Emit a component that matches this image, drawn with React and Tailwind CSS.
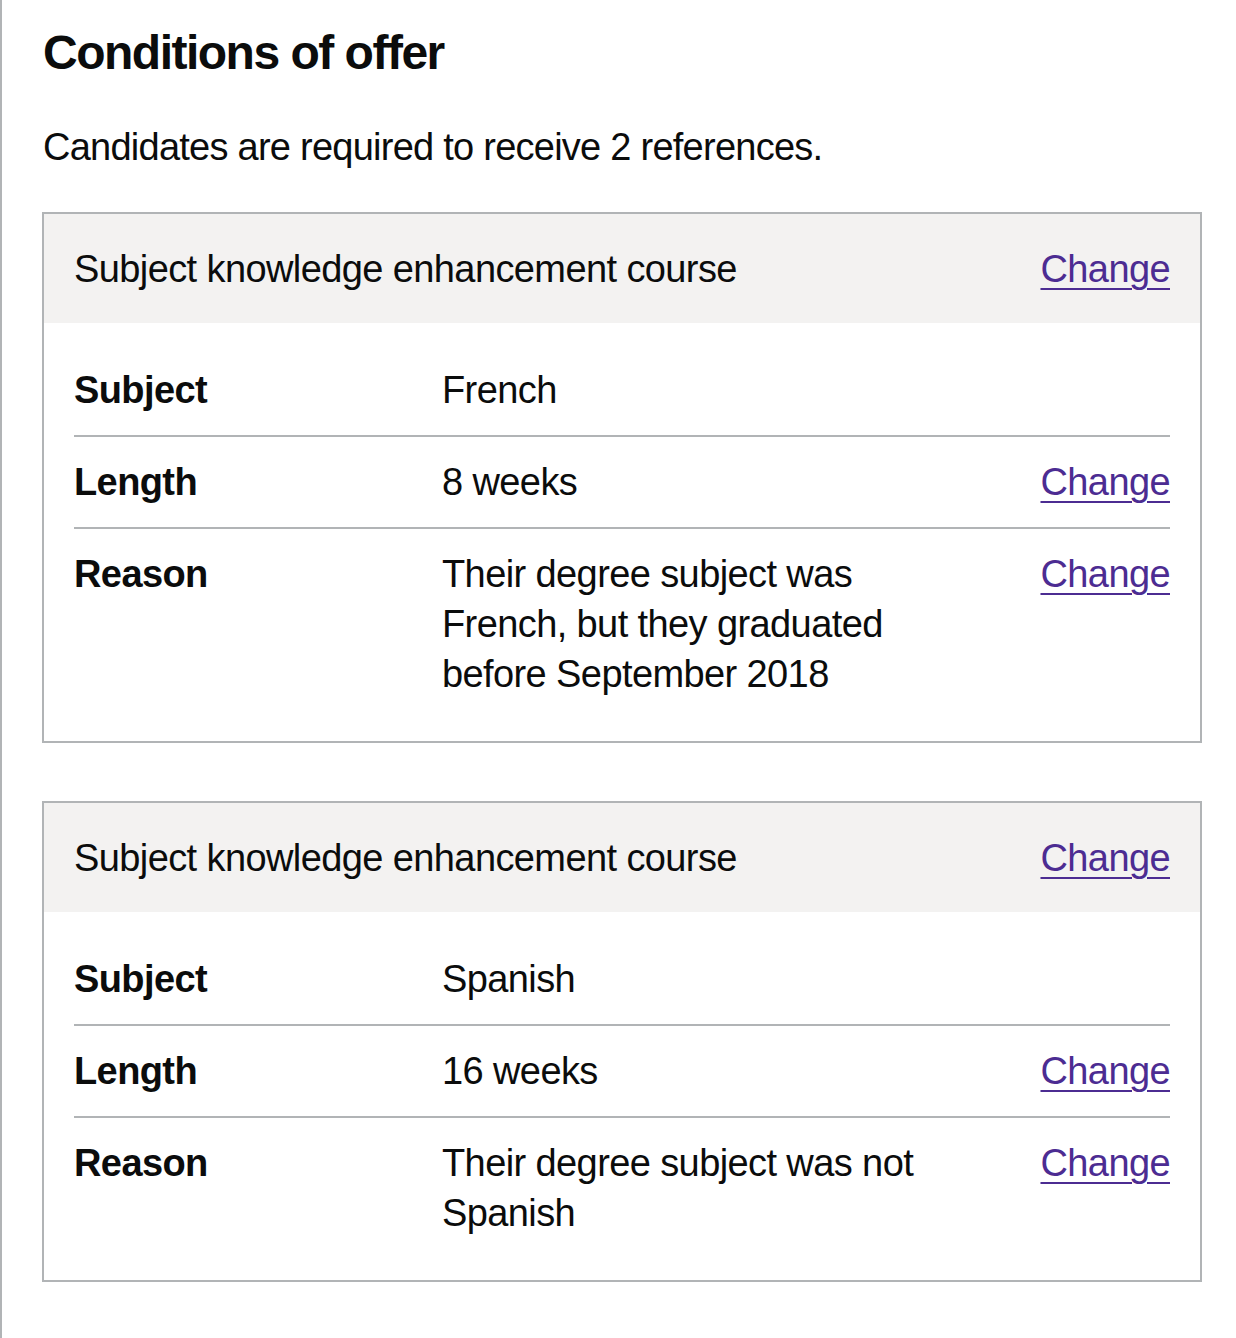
import React from "react";

/**
 * Conditions of offer
 * - Two summary cards (grey header bar + key/value/action rows)
 * - Everything drawn at 2x GOV.UK scale
 */

const cards = [
  {
    title: "Subject knowledge enhancement course",
    rows: [
      { key: "Subject", value: ["French"], change: false },
      { key: "Length", value: ["8 weeks"], change: true },
      {
        key: "Reason",
        value: ["Their degree subject was French, but they graduated before September 2018"],
        change: true,
      },
    ],
  },
  {
    title: "Subject knowledge enhancement course",
    rows: [
      { key: "Subject", value: ["Spanish"], change: false },
      { key: "Length", value: ["16 weeks"], change: true },
      { key: "Reason", value: ["Their degree subject was not Spanish"], change: true },
    ],
  },
];

export default function App() {
  return (
    <div
      className="min-h-[1338px] border-l-2 border-[#b1b4b6] bg-white pl-[40px] pr-[34px] pt-[23px] text-[#0b0c0c]"
      style={{ fontFamily: '"Liberation Sans", Arial, sans-serif' }}
    >
      <h1 className="mb-[39px] pl-px text-[48px] font-bold leading-[60px] tracking-[-1.5px]">
        Conditions of offer
      </h1>
      <p className="mb-[40px] pl-px text-[38px] leading-[50px] tracking-[-0.75px]">
        Candidates are required to receive 2 references.
      </p>
      <div className="flex flex-col gap-[58px]">
        {cards.map((card, i) => (
          <Card key={i} card={card} />
        ))}
      </div>
    </div>
  );
}

function Card({ card }) {
  return (
    <div className="border-2 border-[#b1b4b6] text-[38px] leading-[50px] tracking-[-0.6px]">
      <div className="flex items-start justify-between bg-[#f3f2f1] px-[30px] pb-[29px] pt-[30px]">
        <div>{card.title}</div>
        <ChangeLink />
      </div>
      <div className="px-[30px] pb-[22px] pt-[22px]">
        {card.rows.map((row, i) => (
          <div
            key={row.key}
            className={
              "grid grid-cols-[368px_500px_1fr] py-[20px] " +
              (i < card.rows.length - 1 ? "border-b-2 border-[#b1b4b6]" : "")
            }
          >
            <div className="font-bold">{row.key}</div>
            <div>{row.value}</div>
            <div className="text-right">{row.change && <ChangeLink />}</div>
          </div>
        ))}
      </div>
    </div>
  );
}

function ChangeLink() {
  return (
    <a
      href="#"
      className="text-[#4c2c92] underline decoration-2 underline-offset-[6px]"
    >
      Change
    </a>
  );
}
